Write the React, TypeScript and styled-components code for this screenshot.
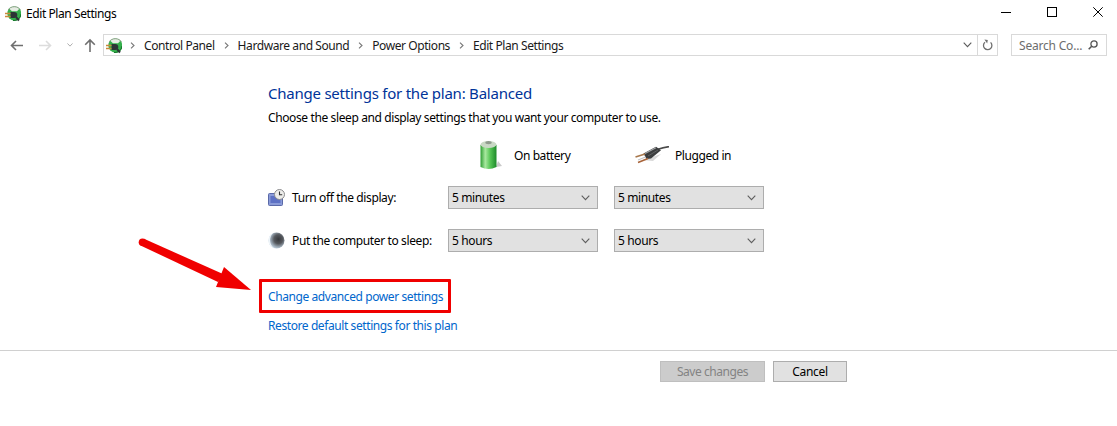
import React from "react";
import styled, { createGlobalStyle } from "styled-components";

const Global = createGlobalStyle`
  html, body { margin: 0; padding: 0; background: #fff; }
  body { font-family: "Noto Sans", "Open Sans", sans-serif; font-size: 12px; color: #000; }
`;

const Page = styled.div`
  position: relative;
  width: 1117px;
  height: 426px;
  overflow: hidden;
  background: #fff;
`;

const TitleBar = styled.div`
  display: flex;
  align-items: center;
  height: 26px;
  padding-left: 5px;
`;
const TitleText = styled.span`
  margin-left: 5px;
  font-size: 12px;
  letter-spacing: -0.42px;
  flex: 1;
`;
const WindowControls = styled.div`
  display: flex;
  align-items: center;
  gap: 16px;
  padding-right: 4px;
  margin-top: -2px;
`;
const WinButton = styled.div`
  width: 30px;
  height: 24px;
  display: flex;
  align-items: center;
  justify-content: center;
`;

const NavBar = styled.div`
  display: flex;
  align-items: center;
  height: 22px;
  margin-top: 8px;
  padding-left: 8px;
`;
const NavIcon = styled.div<{ $w: number; $ml?: number }>`
  width: ${(p) => p.$w}px;
  margin-left: ${(p) => p.$ml ?? 0}px;
  display: flex;
  align-items: center;
  justify-content: center;
`;
const AddressBox = styled.div`
  box-sizing: border-box;
  width: 895px;
  height: 22px;
  margin-left: 6px;
  border: 1px solid #d9d9d9;
  display: flex;
  align-items: center;
  padding-left: 2px;
`;
const Crumbs = styled.div`
  flex: 1;
  display: flex;
  align-items: center;
  margin-left: -1px;
`;
const Crumb = styled.span`
  color: #1a1a1a;
  letter-spacing: -0.42px;
  white-space: nowrap;
`;
const CrumbSep = styled.span`
  width: 23px;
  display: flex;
  justify-content: center;
`;
const AddressTool = styled.div<{ $divided?: boolean }>`
  box-sizing: border-box;
  height: 20px;
  width: ${(p) => (p.$divided ? 20 : 19)}px;
  display: flex;
  align-items: center;
  justify-content: center;
  border-left: ${(p) => (p.$divided ? "1px solid #d9d9d9" : "none")};
`;
const SearchBox = styled.div`
  box-sizing: border-box;
  width: 96px;
  height: 22px;
  margin-left: 13px;
  border: 1px solid #d9d9d9;
  display: flex;
  align-items: center;
  justify-content: space-between;
  padding: 0 8px 0 7px;
  color: #6d6d6d;
  letter-spacing: -0.2px;
  white-space: nowrap;
`;

const Content = styled.main`
  padding: 27px 0 0 268px;
`;
const Heading = styled.h1`
  margin: 0;
  font-size: 15px;
  line-height: 20px;
  font-weight: 400;
  color: #003399;
  letter-spacing: -0.23px;
`;
const Subtitle = styled.p`
  margin: 5px 0 0;
  line-height: 20px;
  letter-spacing: -0.385px;
`;
const PowerColumns = styled.div`
  display: flex;
  height: 36px;
  margin: 9px 0 0 180px;
`;
const PowerColumn = styled.div`
  width: 166px;
  display: flex;
  align-items: center;
  letter-spacing: -0.42px;
`;
const BatterySlot = styled.div`
  width: 35px;
  padding-left: 31px;
  display: flex;
`;
const PlugSlot = styled.div`
  width: 40px;
  padding-left: 21px;
  display: flex;
`;
const SettingRow = styled.div`
  display: flex;
  align-items: center;
  height: 23px;
  margin-top: 20px;
  &:first-of-type { margin-top: 0; }
`;
const SettingLabel = styled.div`
  width: 180px;
  display: flex;
  align-items: center;
  letter-spacing: -0.38px;
  white-space: nowrap;
`;
const RowIcon = styled.span`
  width: 24px;
  display: flex;
`;
const SelectBox = styled.div`
  box-sizing: border-box;
  width: 150px;
  height: 23px;
  margin-right: 16px;
  background: #e1e1e1;
  border: 1px solid #adadad;
  display: flex;
  align-items: center;
  justify-content: space-between;
  padding: 0 7px 0 3px;
  letter-spacing: -0.38px;
`;
const Rows = styled.div`
  margin-top: 13px;
`;
const Links = styled.div`
  margin: 27px 0 0 -9px;
`;
const HighlightBox = styled.div`
  box-sizing: border-box;
  width: 192px;
  height: 34px;
  border: 3px solid #f00000;
  border-radius: 1px;
  display: flex;
  align-items: center;
  padding: 1px 0 0 6px;
`;
const PlanLink = styled.a`
  color: #0066cc;
  letter-spacing: -0.41px;
  white-space: nowrap;
  line-height: 20px;
`;
const RestoreRow = styled.div`
  margin: 3px 0 0 9px;
`;
const Divider = styled.hr`
  margin: 14px 0 0;
  border: 0;
  border-top: 1px solid #d0d0d0;
`;
const Footer = styled.div`
  display: flex;
  gap: 8px;
  padding: 10px 0 0 660px;
`;
const Button = styled.button<{ $disabled?: boolean }>`
  box-sizing: border-box;
  height: 21px;
  width: ${(p) => (p.$disabled ? 105 : 74)}px;
  padding: 0;
  font: inherit;
  letter-spacing: ${(p) => (p.$disabled ? -0.45 : -0.3)}px;
  color: ${(p) => (p.$disabled ? "#838383" : "#000")};
  background: ${(p) => (p.$disabled ? "#cccccc" : "#e1e1e1")};
  border: 1px solid ${(p) => (p.$disabled ? "#bfbfbf" : "#adadad")};
`;
const ArrowOverlay = styled.svg`
  position: absolute;
  left: 135px;
  top: 235px;
`;

const PowerIcon = () => (
  <svg width="16" height="17" viewBox="0 0 16 17">
    <circle cx="9.3" cy="8.5" r="7" fill="#35b04c" />
    <path d="M4.2 3.8 A7 7 0 0 1 14.4 3.8 L12 6.2 H7 Z" fill="#e6ece3" />
    <path d="M3.2 5 C5.2 0.6 13.4 0.6 15.4 5" fill="none" stroke="#7f9a7c" strokeWidth="0.9" />
    <path d="M8 15.4 A7 7 0 0 0 16 9" fill="none" stroke="#157a2c" strokeWidth="1.2" />
    <path d="M5.5 7 H9 C11.2 7 12.3 8.3 12.3 10 C12.3 11.8 11 13 9 13 H5.5 Z" fill="#2c3436" />
    <path d="M11 12 L14 15.5" stroke="#2c3436" strokeWidth="2" />
    <path d="M0 8.5 H5.5 M0 11.5 H5.5" stroke="#c98a3a" strokeWidth="1.3" />
  </svg>
);

const Chevron = ({ color = "#7a7a7a", w = 9 }: { color?: string; w?: number }) => (
  <svg width={w} height="6" viewBox="0 0 9 6">
    <path d="M0.7 0.7 L4.5 4.7 L8.3 0.7" fill="none" stroke={color} strokeWidth="1.1" />
  </svg>
);

const SmallArrow = () => (
  <svg width="5" height="7" viewBox="0 0 5 7">
    <path d="M1 0.7 L4 3.5 L1 6.3" fill="none" stroke="#777" strokeWidth="1.1" />
  </svg>
);

const Battery = () => (
  <svg width="24" height="32" viewBox="0 0 24 32">
    <defs>
      <linearGradient id="batBody" x1="0" x2="1" y1="0" y2="0">
        <stop offset="0" stopColor="#2f9e34" />
        <stop offset="0.3" stopColor="#a8e89f" />
        <stop offset="0.6" stopColor="#57c656" />
        <stop offset="1" stopColor="#1d8a2a" />
      </linearGradient>
    </defs>
    <path d="M17 28 L23 27 L19 22 Z" fill="#c9c9c9" />
    <path d="M1.5 6 H17.5 V28 Q9.5 32 1.5 28 Z" fill="url(#batBody)" />
    <ellipse cx="9.5" cy="5.5" rx="8" ry="3.5" fill="#c9d8c5" />
    <ellipse cx="9.5" cy="3.6" rx="3.2" ry="1.6" fill="#8f9a8d" />
  </svg>
);

const Plug = () => (
  <svg width="34" height="18" viewBox="0 0 34 18">
    <path d="M8 14 L18 15 L26 8 Z" fill="#d8d8d8" />
    <path d="M22 3.5 C27 2 30 1.2 34 0.6" fill="none" stroke="#4a4a4a" strokeWidth="1.6" />
    <path d="M8.5 7.5 L21 0.8 L26 4.2 L16 12.5 L11.5 13 Z" fill="#3a3c3d" />
    <path d="M10 7.4 L21 1.8" stroke="#a3a5a6" strokeWidth="1.1" />
    <path d="M13 10 L23 4" stroke="#5d5f60" strokeWidth="1" />
    <path d="M0.5 11 L10 8" stroke="#a8784c" strokeWidth="1.7" />
    <path d="M3 16.5 L13 12.5" stroke="#a8643a" strokeWidth="1.7" />
    <path d="M3 14 L10.5 11" stroke="#c2c2c2" strokeWidth="1.1" />
  </svg>
);

const DisplayIcon = () => (
  <svg width="18" height="17" viewBox="0 0 18 17">
    <rect x="0.5" y="4.5" width="14" height="12" rx="1" fill="#8a9bd8" stroke="#5a69a8" />
    <rect x="2.5" y="7" width="10" height="7" fill="#5d71c4" />
    <circle cx="11.5" cy="5.5" r="5" fill="#ededea" stroke="#8a8b8d" />
    <path d="M11.5 2.5 V5.8 H14.2" fill="none" stroke="#333" strokeWidth="1.1" />
  </svg>
);

const SleepIcon = () => (
  <svg width="17" height="17" viewBox="0 0 17 17">
    <defs>
      <radialGradient id="moon" cx="0.62" cy="0.42" r="0.62">
        <stop offset="0" stopColor="#36383c" />
        <stop offset="0.45" stopColor="#55585d" />
        <stop offset="0.78" stopColor="#9aa7b3" />
        <stop offset="1" stopColor="#c4d4e2" />
      </radialGradient>
    </defs>
    <circle cx="8.5" cy="8.5" r="8" fill="url(#moon)" />
    <path d="M5.5 1 A8 8 0 0 0 6.5 16.2 A7 8.5 0 0 1 5.5 1 Z" fill="#eef4f9" />
  </svg>
);

const PLANS = [
  { label: "Turn off the display:", icon: <DisplayIcon />, value: "minutes" },
  { label: "Put the computer to sleep:", icon: <SleepIcon />, value: "hours" },
];

const CRUMBS = ["Control Panel", "Hardware and Sound", "Power Options", "Edit Plan Settings"];

export default function App() {
  return (
    <Page>
      <Global />
      <TitleBar>
        <PowerIcon />
        <TitleText>Edit Plan Settings</TitleText>
        <WindowControls>
          <WinButton>
            <svg width="10" height="10" viewBox="0 0 10 10"><path d="M0 5.5 H10" stroke="#000" /></svg>
          </WinButton>
          <WinButton>
            <svg width="10" height="10" viewBox="0 0 10 10"><rect x="0.5" y="0.5" width="9" height="9" fill="none" stroke="#000" /></svg>
          </WinButton>
          <WinButton>
            <svg width="10" height="10" viewBox="0 0 10 10"><path d="M0.3 0.3 L9.7 9.7 M9.7 0.3 L0.3 9.7" stroke="#000" /></svg>
          </WinButton>
        </WindowControls>
      </TitleBar>
      <NavBar>
        <NavIcon $w={17}>
          <svg width="13" height="11" viewBox="0 0 13 11"><path d="M13 5.5 H2 M6 1 L1.5 5.5 L6 10" fill="none" stroke="#6f6f6f" strokeWidth="1.6" /></svg>
        </NavIcon>
        <NavIcon $w={41}>
          <svg width="13" height="11" viewBox="0 0 13 11"><path d="M0 5.5 H11 M7 1 L11.5 5.5 L7 10" fill="none" stroke="#dcdcdc" strokeWidth="1.6" /></svg>
        </NavIcon>
        <NavIcon $w={7}>
          <Chevron color="#909090" w={6} />
        </NavIcon>
        <NavIcon $w={15} $ml={9}>
          <svg width="12" height="14" viewBox="0 0 12 14"><path d="M6 14 V2 M1.2 6.8 L6 2 L10.8 6.8" fill="none" stroke="#6f6f6f" strokeWidth="1.6" /></svg>
        </NavIcon>
        <AddressBox>
          <PowerIcon />
          <Crumbs>
            {CRUMBS.map((c) => (
              <React.Fragment key={c}>
                <CrumbSep><SmallArrow /></CrumbSep>
                <Crumb>{c}</Crumb>
              </React.Fragment>
            ))}
          </Crumbs>
          <AddressTool><Chevron color="#5c5c5c" /></AddressTool>
          <AddressTool $divided>
            <svg width="11" height="12" viewBox="0 0 11 12">
              <path d="M8.6 3.4 A4.2 4.2 0 1 1 3 3.2" fill="none" stroke="#6f6f6f" strokeWidth="1.3" />
              <path d="M2.4 0.4 L5.8 0.9 L5.2 4.4 Z" fill="#6f6f6f" />
            </svg>
          </AddressTool>
        </AddressBox>
        <SearchBox>
          <span>Search Co...</span>
          <svg width="10" height="10" viewBox="0 0 10 10">
            <circle cx="6" cy="4" r="3.1" fill="none" stroke="#555" strokeWidth="1.3" />
            <path d="M3.7 6.3 L0.7 9.3" stroke="#555" strokeWidth="1.6" />
          </svg>
        </SearchBox>
      </NavBar>
      <Content>
        <Heading>Change settings for the plan: Balanced</Heading>
        <Subtitle>Choose the sleep and display settings that you want your computer to use.</Subtitle>
        <PowerColumns>
          <PowerColumn>
            <BatterySlot><Battery /></BatterySlot>
            <span>On battery</span>
          </PowerColumn>
          <PowerColumn>
            <PlugSlot><Plug /></PlugSlot>
            <span>Plugged in</span>
          </PowerColumn>
        </PowerColumns>
        <Rows>
          {PLANS.map((r) => (
            <SettingRow key={r.label}>
              <SettingLabel>
                <RowIcon>{r.icon}</RowIcon>
                {r.label}
              </SettingLabel>
              <SelectBox>5 {r.value}<Chevron color="#5f5f5f" /></SelectBox>
              <SelectBox>5 {r.value}<Chevron color="#5f5f5f" /></SelectBox>
            </SettingRow>
          ))}
        </Rows>
        <Links>
          <HighlightBox>
            <PlanLink>Change advanced power settings</PlanLink>
          </HighlightBox>
          <RestoreRow>
            <PlanLink>Restore default settings for this plan</PlanLink>
          </RestoreRow>
        </Links>
      </Content>
      <Divider />
      <Footer>
        <Button $disabled disabled>Save changes</Button>
        <Button>Cancel</Button>
      </Footer>
      <ArrowOverlay width="120" height="60" viewBox="0 0 120 60">
        <circle cx="7.5" cy="7.3" r="3.8" fill="#f00000" />
        <path d="M9 3.8 L88 39 L83 47 L5.5 10.5 Z" fill="#f00000" />
        <path d="M116 55 L81 52 L89 32 Z" fill="#f00000" />
      </ArrowOverlay>
    </Page>
  );
}
